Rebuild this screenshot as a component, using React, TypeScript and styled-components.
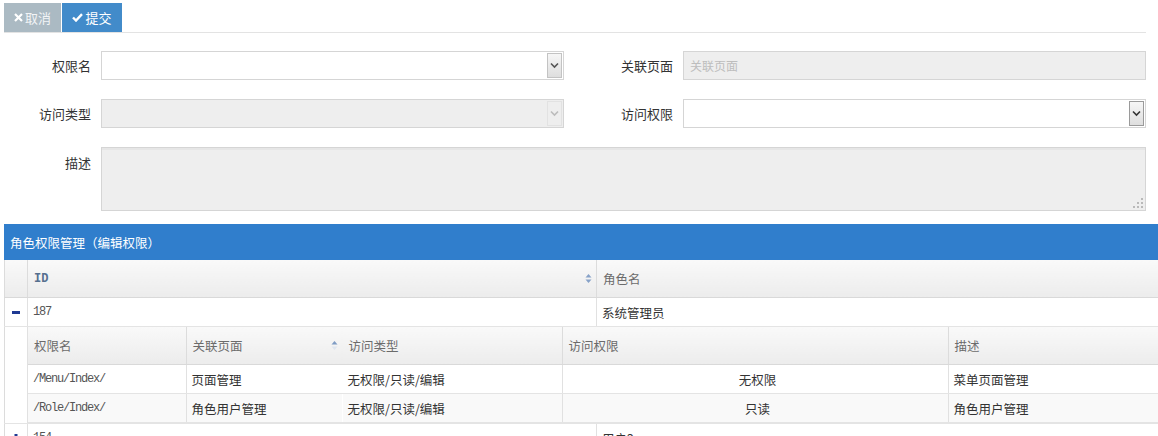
import React from 'react'
import styled, { createGlobalStyle } from 'styled-components'

const GlobalStyle = createGlobalStyle`
  html, body {
    margin: 0;
    padding: 0;
    background: #fff;
  }
  body {
    width: 1158px;
    height: 436px;
    overflow: hidden;
    font-family: "Noto Sans CJK SC", "Liberation Sans", sans-serif;
    font-size: 12px;
    color: #333;
  }
`

const Page = styled.div`
  padding: 3px 0 0 4px;
`

const Toolbar = styled.div`
  display: flex;
  gap: 1px;
  margin-right: 12px;
  border-bottom: 1px solid #e3e3e3;
`

const ToolButton = styled.button<{ $tone: 'grey' | 'blue'; $w: number }>`
  width: ${(p) => p.$w}px;
  height: 29px;
  padding: 0;
  border: 0;
  background: ${(p) => (p.$tone === 'grey' ? '#abbac3' : '#428bca')};
  color: ${(p) => (p.$tone === 'grey' ? '#f2f4f6' : '#fff')};
  font-family: inherit;
  font-size: 13px;
  display: flex;
  align-items: center;
  justify-content: center;
  gap: 2px;
`

const Form = styled.div`
  margin-right: 12px;
  padding-top: 18px;
  display: flex;
  flex-direction: column;
  gap: 19px;
`

const FormRow = styled.div`
  display: flex;
  gap: 11px;
`

const Field = styled.div<{ $top?: boolean }>`
  display: flex;
  align-items: ${(p) => (p.$top ? 'flex-start' : 'center')};
`

const Label = styled.label<{ $w: number; $top?: boolean }>`
  width: ${(p) => p.$w}px;
  flex-shrink: 0;
  box-sizing: border-box;
  padding-right: 10px;
  padding-top: ${(p) => (p.$top ? '6px' : '0')};
  text-align: right;
  font-size: 13px;
  color: #333;
`

const SelectBox = styled.div<{ $disabled?: boolean }>`
  width: 463px;
  height: 29px;
  box-sizing: border-box;
  border: 1px solid #d5d5d5;
  background: ${(p) => (p.$disabled ? '#eeeeee' : '#fff')};
  display: flex;
  justify-content: flex-end;
  align-items: stretch;
  padding: 1px;
`

const SelectArrow = styled.div<{ $strong?: boolean; $disabled?: boolean }>`
  width: 15px;
  box-sizing: border-box;
  border: 1px solid ${(p) => (p.$strong ? '#9a9a9a' : p.$disabled ? '#e2e2e2' : '#c3c3c3')};
  background: ${(p) =>
    p.$disabled ? '#eeeeee' : 'linear-gradient(#f6f6f6, #dedede)'};
  display: flex;
  align-items: center;
  justify-content: center;
`

const TextBox = styled.div`
  width: 463px;
  height: 29px;
  box-sizing: border-box;
  border: 1px solid #d5d5d5;
  background: #eeeeee;
  color: #bdbdbd;
  font-size: 12px;
  display: flex;
  align-items: center;
  padding-left: 6px;
`

const TextArea = styled.div`
  position: relative;
  width: 1045px;
  height: 64px;
  box-sizing: border-box;
  border: 1px solid #d5d5d5;
  background: #eeeeee;
  box-shadow: inset 0 2px 0 #e6e6e6;
`

const Grip = styled.svg`
  position: absolute;
  right: 1px;
  bottom: 1px;
`

const PanelTitle = styled.div`
  margin-top: 13px;
  height: 36px;
  background: #307ecc;
  color: #fff;
  font-size: 12.5px;
  display: flex;
  align-items: center;
  padding-left: 6px;
`

const Table = styled.table<{ $w: number }>`
  width: ${(p) => p.$w}px;
  table-layout: fixed;
  border-collapse: collapse;
  border-spacing: 0;
`

const HeadCell = styled.th<{ $noline?: boolean }>`
  height: 37px;
  padding: 0 0 0 6px;
  text-align: left;
  font-weight: normal;
  font-size: 12.5px;
  color: #6b6b6b;
  background: linear-gradient(#f9f9f9, #ececec);
  border-right: 1px solid ${(p) => (p.$noline ? 'transparent' : '#dcdcdc')};
  border-bottom: 1px solid #d9d9d9;
`

const HeadInner = styled.div`
  display: flex;
  align-items: center;
  justify-content: space-between;
  padding-right: 4px;
`

const IdText = styled.span`
  font-family: "Liberation Mono", monospace;
  font-weight: bold;
  font-size: 12px;
  color: #56708f;
`

const Row = styled.tr<{ $alt?: boolean }>`
  background: ${(p) => (p.$alt ? '#f9f9f9' : '#fff')};
`

const Cell = styled.td<{ $center?: boolean; $noline?: boolean; $mono?: boolean }>`
  height: 28px;
  padding: 0 0 0 5px;
  text-align: ${(p) => (p.$center ? 'center' : 'left')};
  font-size: ${(p) => (p.$mono ? '12px' : '12.5px')};
  font-family: ${(p) => (p.$mono ? '"Liberation Mono", monospace' : 'inherit')};
  letter-spacing: ${(p) => (p.$mono ? '-1.2px' : 'normal')};
  color: ${(p) => (p.$mono ? '#555' : '#333')};
  border-right: 1px solid ${(p) => (p.$noline ? 'transparent' : '#e1e1e1')};
  border-bottom: 1px solid #e4e4e4;
  white-space: nowrap;
  overflow: hidden;
`

const TreeCell = styled.td`
  height: 28px;
  padding: 0;
  border-right: 1px solid #e1e1e1;
  border-left: 1px solid #dcdcdc;
  border-bottom: 1px solid #e4e4e4;
  text-align: center;
  vertical-align: middle;
`

const SubHolder = styled.td`
  padding: 0;
  border-bottom: 1px solid #e4e4e4;
`

const ChevronDown = ({ color }: { color: string }) => (
  <svg width="9" height="7" viewBox="0 0 9 7">
    <path d="M1 1.5 L4.5 5 L8 1.5" fill="none" stroke={color} strokeWidth="1.6" />
  </svg>
)

const SortIcon = ({ single }: { single?: boolean }) => (
  <svg width="7" height="11" viewBox="0 0 7 11">
    <path d="M0.5 4.5 L3.5 1 L6.5 4.5 Z" fill={single ? '#7f9cc4' : '#87a2c8'} />
    <path d="M0.5 6.5 L3.5 10 L6.5 6.5 Z" fill={single ? '#dfe6ef' : '#87a2c8'} />
  </svg>
)

const Minus = () => (
  <svg width="10" height="10" viewBox="0 0 10 10" style={{ display: 'block', margin: '0 auto' }}>
    <rect x="1" y="4" width="8" height="3" fill="#1f3a93" />
  </svg>
)

const Plus = () => (
  <svg width="10" height="10" viewBox="0 0 10 10" style={{ display: 'block', margin: '0 auto' }}>
    <rect x="1" y="4" width="8" height="3" fill="#1f3a93" />
    <rect x="3.5" y="1" width="3" height="9" fill="#1f3a93" />
  </svg>
)

const subRows = [
  { name: '/Menu/Index/', page: '页面管理', type: '无权限/只读/编辑', access: '无权限', desc: '菜单页面管理' },
  { name: '/Role/Index/', page: '角色用户管理', type: '无权限/只读/编辑', access: '只读', desc: '角色用户管理' },
]

const App = () => {
  return (
    <Page>
      <GlobalStyle />
      <Toolbar>
        <ToolButton $tone="grey" $w={57}>
          <svg width="9" height="9" viewBox="0 0 9 9">
            <path d="M1 1 L8 8 M8 1 L1 8" stroke="#fff" strokeWidth="2.2" />
          </svg>
          取消
        </ToolButton>
        <ToolButton $tone="blue" $w={60}>
          <svg width="11" height="9" viewBox="0 0 11 9">
            <path d="M1 4.5 L4 7.5 L10 1.2" fill="none" stroke="#fff" strokeWidth="2.4" />
          </svg>
          提交
        </ToolButton>
      </Toolbar>

      <Form>
        <FormRow>
          <Field>
            <Label $w={97}>权限名</Label>
            <SelectBox>
              <SelectArrow>
                <ChevronDown color="#555" />
              </SelectArrow>
            </SelectBox>
          </Field>
          <Field>
            <Label $w={108}>关联页面</Label>
            <TextBox>关联页面</TextBox>
          </Field>
        </FormRow>
        <FormRow>
          <Field>
            <Label $w={97}>访问类型</Label>
            <SelectBox $disabled>
              <SelectArrow $disabled>
                <ChevronDown color="#bcbcbc" />
              </SelectArrow>
            </SelectBox>
          </Field>
          <Field>
            <Label $w={108}>访问权限</Label>
            <SelectBox>
              <SelectArrow $strong>
                <ChevronDown color="#333" />
              </SelectArrow>
            </SelectBox>
          </Field>
        </FormRow>
        <FormRow>
          <Field $top>
            <Label $w={97} $top>描述</Label>
            <TextArea>
              <Grip width="12" height="12" viewBox="0 0 12 12">
                <rect x="9" y="1" width="2" height="2" fill="#b9b9b9" />
                <rect x="5" y="5" width="2" height="2" fill="#b9b9b9" />
                <rect x="9" y="5" width="2" height="2" fill="#b9b9b9" />
                <rect x="1" y="9" width="2" height="2" fill="#b9b9b9" />
                <rect x="5" y="9" width="2" height="2" fill="#b9b9b9" />
                <rect x="9" y="9" width="2" height="2" fill="#b9b9b9" />
              </Grip>
            </TextArea>
          </Field>
        </FormRow>
      </Form>

      <PanelTitle>角色权限管理（编辑权限）</PanelTitle>
      <Table $w={1200}>
        <colgroup>
          <col style={{ width: 23 }} />
          <col style={{ width: 569 }} />
          <col />
        </colgroup>
        <thead>
          <tr>
            <HeadCell style={{ borderLeft: '1px solid #dcdcdc' }} />
            <HeadCell>
              <HeadInner>
                <IdText>ID</IdText>
                <SortIcon />
              </HeadInner>
            </HeadCell>
            <HeadCell>角色名</HeadCell>
          </tr>
        </thead>
        <tbody>
          <Row>
            <TreeCell>
              <Minus />
            </TreeCell>
            <Cell $mono>187</Cell>
            <Cell>系统管理员</Cell>
          </Row>
          <tr>
            <TreeCell />
            <SubHolder colSpan={2}>
              <Table $w={1220}>
                <colgroup>
                  <col style={{ width: 158 }} />
                  <col style={{ width: 156 }} />
                  <col style={{ width: 220 }} />
                  <col style={{ width: 386 }} />
                  <col />
                </colgroup>
                <thead>
                  <tr>
                    <HeadCell>权限名</HeadCell>
                    <HeadCell $noline>
                      <HeadInner>
                        关联页面
                        <SortIcon single />
                      </HeadInner>
                    </HeadCell>
                    <HeadCell>访问类型</HeadCell>
                    <HeadCell>访问权限</HeadCell>
                    <HeadCell>描述</HeadCell>
                  </tr>
                </thead>
                <tbody>
                  {subRows.map((r, i) => (
                    <Row key={r.name} $alt={i % 2 === 1}>
                      <Cell $mono>{r.name}</Cell>
                      <Cell $noline>{r.page}</Cell>
                      <Cell>{r.type}</Cell>
                      <Cell $center>{r.access}</Cell>
                      <Cell>{r.desc}</Cell>
                    </Row>
                  ))}
                </tbody>
              </Table>
            </SubHolder>
          </tr>
          <Row>
            <TreeCell>
              <Plus />
            </TreeCell>
            <Cell $mono>154</Cell>
            <Cell>用户2</Cell>
          </Row>
        </tbody>
      </Table>
    </Page>
  )
}

export default App
